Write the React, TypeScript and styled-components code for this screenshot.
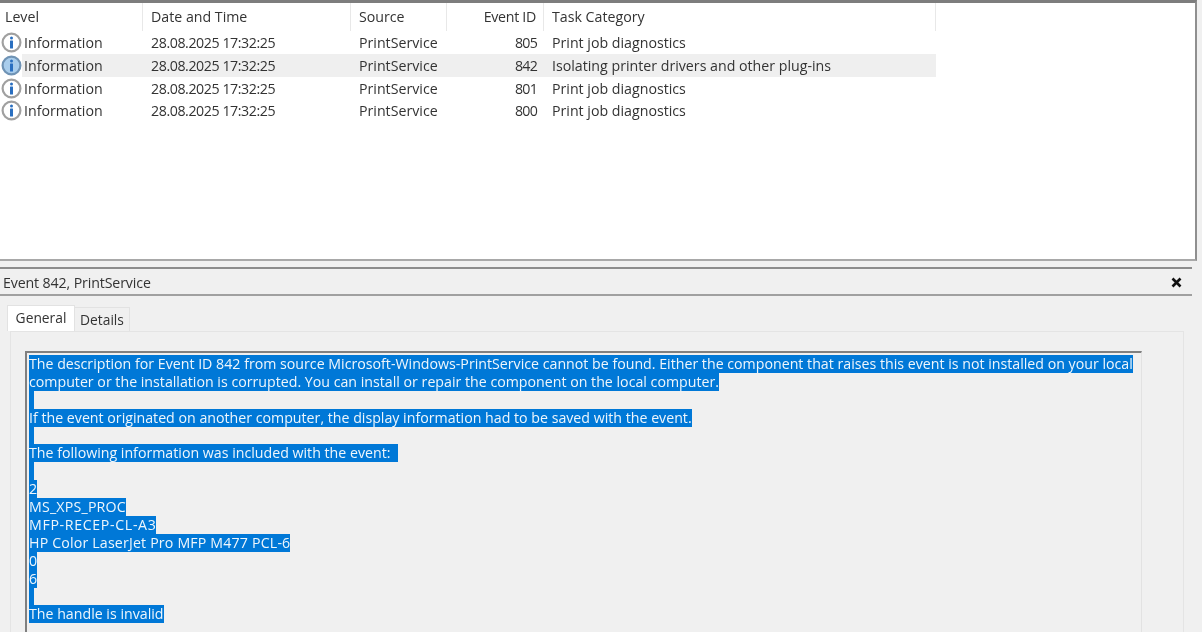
import styled, { createGlobalStyle } from 'styled-components';

const GlobalStyle = createGlobalStyle`
    html, body {
        margin: 0;
        padding: 0;
        width: 1202px;
        height: 632px;
        overflow: hidden;
        background: #f0f0f0;
    }
`
const StyledPage = styled.div`
    width: 1202px;
    height: 632px;
    overflow: hidden;
    font-family: 'Open Sans', 'Noto Sans', sans-serif;
    font-size: 14.2px;
    color: #333;
    background: #f0f0f0;
    filter: blur(0.55px);
`
const StyledListPane = styled.div`
    box-sizing: border-box;
    width: 1197px;
    height: 261px;
    background: #fff;
    border-top: 3px solid #7d7d7d;
    border-right: 2px solid #8f8f8f;
    border-bottom: 2px solid #a8a8a8;
`
const StyledHeader = styled.div`
    display: grid;
    grid-template-columns: 143px 208px 96px 97px 392px;
    width: 936px;
    height: 28.4px;
    box-sizing: border-box;
`
const StyledHeaderCell = styled.div<{ $right?: boolean }>`
    box-sizing: border-box;
    display: flex;
    align-items: center;
    justify-content: ${({ $right }) => ($right ? 'flex-end' : 'flex-start')};
    padding: 0 ${({ $right }) => ($right ? '7px' : '0')} 2px ${({ $right }) => ($right ? '0' : '8px')};
    letter-spacing: ${({ $right }) => ($right ? '-0.3px' : '0')};
    border-right: 1px solid #e8e8e8;
    &:first-child {
        padding-left: 5px;
    }
`
const StyledRow = styled.div<{ $selected?: boolean }>`
    display: grid;
    grid-template-columns: 143px 208px 96px 97px 392px;
    width: 936px;
    height: 22.7px;
    align-items: center;
    background: ${({ $selected }) => ($selected ? 'linear-gradient(to right, #fff 22px, #efefef 22px)' : 'transparent')};
`
const StyledLevel = styled.div`
    display: flex;
    align-items: center;
    gap: 2px;
    padding-left: 1px;
`
const StyledCell = styled.div<{ $right?: boolean; $tight?: number }>`
    text-align: ${({ $right }) => ($right ? 'right' : 'left')};
    padding: ${({ $right }) => ($right ? '0 7px 0 0' : '0 0 0 8px')};
    letter-spacing: ${({ $tight }) => $tight ?? 0}px;
    white-space: nowrap;
`
const StyledHeading = styled.div`
    box-sizing: border-box;
    width: 1192px;
    height: 29px;
    margin-top: 6px;
    padding: 1px 9px 0 3px;
    display: flex;
    align-items: center;
    justify-content: space-between;
    letter-spacing: -0.13px;
    border-top: 2px solid #8c8c8c;
    border-bottom: 2px solid #a0a0a0;
`
const StyledClose = styled.svg`
    width: 13px;
    height: 13px;
`
const StyledTabs = styled.div`
    display: flex;
    align-items: flex-end;
    height: 26px;
    margin-top: 9px;
    padding-left: 7px;
`
const StyledTab = styled.div<{ $active?: boolean }>`
    box-sizing: border-box;
    display: flex;
    align-items: center;
    justify-content: center;
    width: ${({ $active }) => ($active ? '68px' : '55px')};
    height: ${({ $active }) => ($active ? '26px' : '24px')};
    font-size: 13.8px;
    background: ${({ $active }) => ($active ? '#fff' : '#f0f0f0')};
    border: 1px solid #e2e2e2;
    border-bottom: none;
    border-left: ${({ $active }) => ($active ? '1px solid #e2e2e2' : 'none')};
    padding-bottom: ${({ $active }) => ($active ? '3px' : '0')};
`
const StyledPanel = styled.div`
    box-sizing: border-box;
    width: 1174px;
    height: 310px;
    margin-left: 10px;
    padding: 19px 0 0 14px;
    border-top: 1px solid #e4e4e4;
    border-left: 1px solid #e4e4e4;
    border-right: 1px solid #e4e4e4;
`
const StyledTextBox = styled.div`
    box-sizing: border-box;
    width: 1117px;
    height: 290px;
    padding: 2px 0 0 2px;
    border-top: 2px solid #808080;
    border-left: 2px solid #808080;
    border-right: 1px solid #e2e2e2;
    line-height: 17.9px;
`
const StyledLine = styled.div`
    height: 17.9px;
    white-space: pre;
`
const StyledSelected = styled.span<{ $wide: number }>`
    display: inline-block;
    height: 17.9px;
    min-width: 5px;
    vertical-align: top;
    letter-spacing: ${({ $wide }) => $wide}px;
    background: #0078d7;
    color: #eef6fc;
`

const rows = [
    { eventId: '805', task: 'Print job diagnostics' },
    { eventId: '842', task: 'Isolating printer drivers and other plug-ins', selected: true },
    { eventId: '801', task: 'Print job diagnostics' },
    { eventId: '800', task: 'Print job diagnostics' },
]

const lines = [
    { text: 'The description for Event ID 842 from source Microsoft-Windows-PrintService cannot be found. Either the component that raises this event is not installed on your local', wide: 0 },
    { text: 'computer or the installation is corrupted. You can install or repair the component on the local computer.', wide: 0 },
    { text: '', wide: 0 },
    { text: 'If the event originated on another computer, the display information had to be saved with the event.', wide: 0 },
    { text: '', wide: 0 },
    { text: 'The following information was included with the event:  ', wide: 0 },
    { text: '', wide: 0 },
    { text: '2', wide: 0 },
    { text: 'MS_XPS_PROC', wide: 0.2 },
    { text: 'MFP-RECEP-CL-A3', wide: 0.65 },
    { text: 'HP Color LaserJet Pro MFP M477 PCL-6', wide: 0.17 },
    { text: '0', wide: 0 },
    { text: '6', wide: 0 },
    { text: '', wide: 0 },
    { text: 'The handle is invalid', wide: 0 },
]

function InfoIcon({ selected }: { selected?: boolean }): JSX.Element {
    return (
        <svg width="21" height="21" viewBox="0 0 21 21">
            <circle cx="10.5" cy="10.5" r="8.9" fill={selected ? '#a9cdec' : '#fff'} stroke={selected ? '#6f93b5' : '#a0a0a0'} strokeWidth="2.2" />
            <circle cx="10.5" cy="6" r="1.5" fill="#2a6fc0" />
            <rect x="9" y="8.4" width="3" height="8" rx="0.5" fill="#2a6fc0" />
        </svg>
    )
}

export default function App(): JSX.Element {
    return (
        <StyledPage>
            <GlobalStyle />
            <StyledListPane>
                <StyledHeader>
                    <StyledHeaderCell>Level</StyledHeaderCell>
                    <StyledHeaderCell>Date and Time</StyledHeaderCell>
                    <StyledHeaderCell>Source</StyledHeaderCell>
                    <StyledHeaderCell $right>Event ID</StyledHeaderCell>
                    <StyledHeaderCell>Task Category</StyledHeaderCell>
                </StyledHeader>
                {rows.map((row) => (
                    <StyledRow key={row.eventId} $selected={row.selected}>
                        <StyledLevel>
                            <InfoIcon selected={row.selected} />
                            Information
                        </StyledLevel>
                        <StyledCell $tight={-0.42}>28.08.2025 17:32:25</StyledCell>
                        <StyledCell>PrintService</StyledCell>
                        <StyledCell $right $tight={-0.8}>{row.eventId}</StyledCell>
                        <StyledCell>{row.task}</StyledCell>
                    </StyledRow>
                ))}
            </StyledListPane>
            <StyledHeading>
                Event 842, PrintService
                <StyledClose viewBox="0 0 13 13">
                    <path d="M2.5 2.5 L10.5 10.5 M10.5 2.5 L2.5 10.5" stroke="#111" strokeWidth="2.6" />
                </StyledClose>
            </StyledHeading>
            <StyledTabs>
                <StyledTab $active>General</StyledTab>
                <StyledTab>Details</StyledTab>
            </StyledTabs>
            <StyledPanel>
                <StyledTextBox>
                    {lines.map((line, index) => (
                        <StyledLine key={index}>
                            <StyledSelected $wide={line.wide}>{line.text}</StyledSelected>
                        </StyledLine>
                    ))}
                </StyledTextBox>
            </StyledPanel>
        </StyledPage>
    )
}
